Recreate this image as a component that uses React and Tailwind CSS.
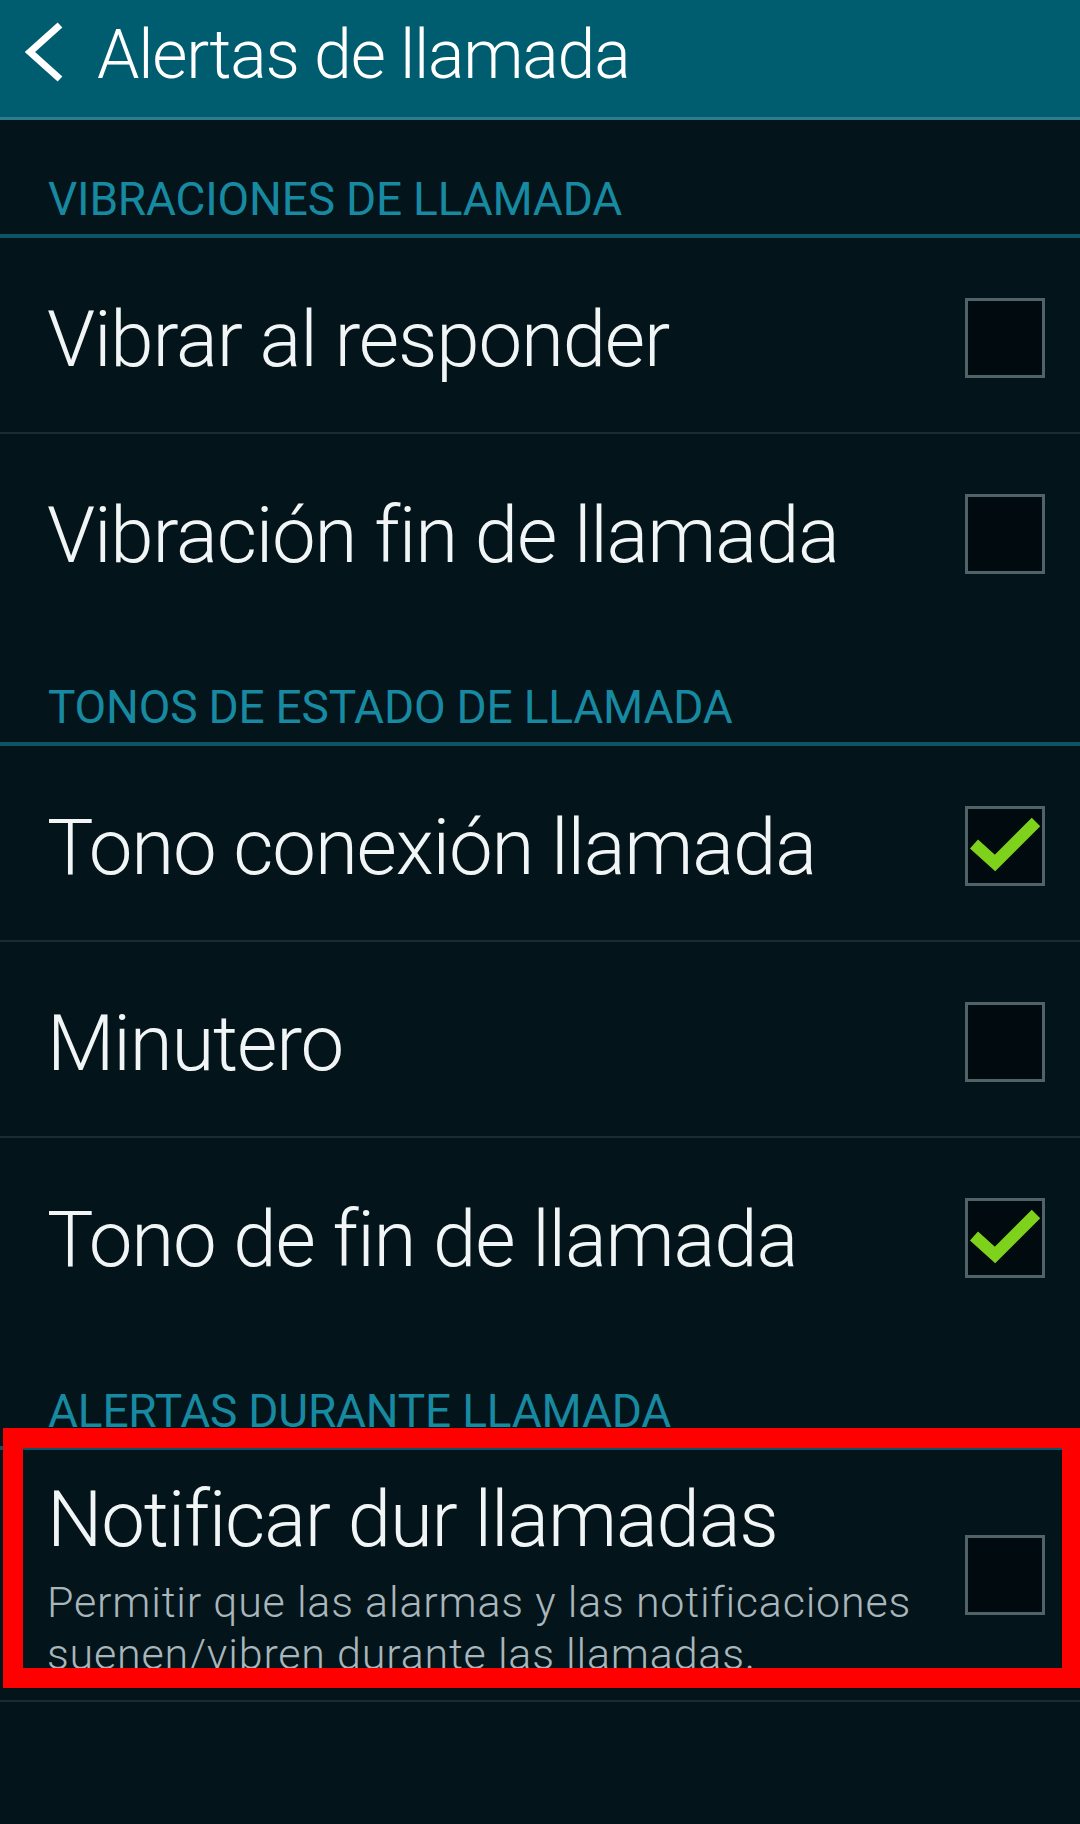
import { Fragment } from 'react'

const SECCIONES = [
  {
    titulo: 'VIBRACIONES DE LLAMADA',
    items: [
      { label: 'Vibrar al responder', checked: false },
      { label: 'Vibración fin de llamada', checked: false },
    ],
  },
  {
    titulo: 'TONOS DE ESTADO DE LLAMADA',
    items: [
      { label: 'Tono conexión llamada', checked: true },
      { label: 'Minutero', checked: false },
      { label: 'Tono de fin de llamada', checked: true },
    ],
  },
]

function Casilla({ checked, className = '' }) {
  return (
    <div className={`relative w-[80px] h-[80px] shrink-0 border-[3px] border-[#4f6369] bg-[#010a0e] ${className}`}>
      {checked && (
        <svg viewBox="0 0 74 74" className="absolute inset-0 w-full h-full overflow-visible">
          <polyline
            points="6,35 27,54 68,13"
            fill="none"
            stroke="#7fd21c"
            strokeWidth="12"
            strokeLinejoin="miter"
          />
        </svg>
      )}
    </div>
  )
}

function Seccion({ titulo }) {
  return (
    <div className="border-b-4 border-[#0e5468]">
      <div className="h-[114px] flex items-end pb-[12px] pl-[48px]">
        <p className="text-[46px] leading-[46px] text-[#178aa2] tracking-[-0.2px]">{titulo}</p>
      </div>
    </div>
  )
}

function Fila({ label, checked }) {
  return (
    <div className="h-[194px] flex items-center justify-between pl-[47px] pr-[35px]">
      <span className="mt-[10px] text-[78px] leading-none font-light text-[#f1f5f6] tracking-[-0.015em] whitespace-nowrap">
        {label}
      </span>
      <Casilla checked={checked} className="mt-[6px]" />
    </div>
  )
}

const Divisor = () => <div className="h-[2px] bg-[#1b2b31]" />

export default function App() {
  return (
    <div className="w-[1080px] h-[1824px] overflow-hidden bg-[#03141a] font-['Roboto','Noto_Sans',sans-serif]">

      {/* Barra superior */}
      <header className="h-[120px] bg-[#005d70] border-b-[3px] border-[#2e7d8c] flex items-center pl-[25px]">
        <svg width="40" height="60" viewBox="0 0 40 60" className="mb-[13px] shrink-0">
          <polyline points="35,3 5,30 35,57" fill="none" stroke="#ffffff" strokeWidth="7" strokeLinejoin="miter" />
        </svg>
        <h1 className="ml-[32px] mb-[7px] text-[68px] leading-none font-light text-white tracking-[-0.018em] whitespace-nowrap">
          Alertas de llamada
        </h1>
      </header>

      {SECCIONES.map(sec => (
        <Fragment key={sec.titulo}>
          <Seccion titulo={sec.titulo} />
          {sec.items.map((it, i) => (
            <Fragment key={it.label}>
              <Fila label={it.label} checked={it.checked} />
              {i < sec.items.length - 1 && <Divisor />}
            </Fragment>
          ))}
        </Fragment>
      ))}

      <Seccion titulo="ALERTAS DURANTE LLAMADA" />

      {/* Fila resaltada */}
      <div className="relative">
        <div className="h-[250px] flex items-center justify-between pl-[47px] pr-[35px]">
          <div className="w-[895px] pt-[4px]">
            <p className="text-[78px] leading-[92px] font-light text-[#f1f5f6] tracking-[-0.015em] whitespace-nowrap">
              Notificar dur llamadas
            </p>
            <p className="mt-[10px] text-[43px] leading-[52px] font-light text-[#a9b6bb] tracking-[0.8px]">
              Permitir que las alarmas y las notificaciones suenen/vibren durante las llamadas.
            </p>
          </div>
          <Casilla checked={false} />
        </div>
        <div className="absolute -top-[22px] left-[3px] right-0 h-[260px] border-[20px] border-r-[18px] border-[#ff0000] pointer-events-none" />
      </div>
      <Divisor />
    </div>
  )
}
